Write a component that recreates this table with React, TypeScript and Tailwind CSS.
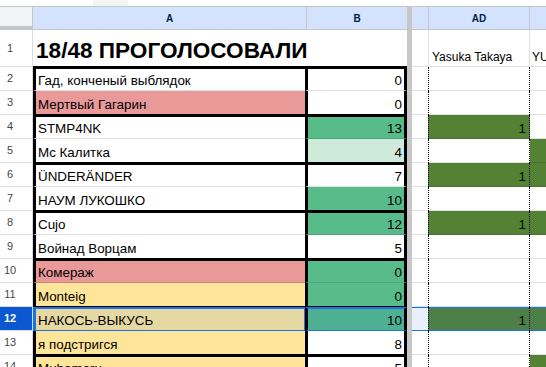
import React from "react"

interface SheetRow {
	n: number
	name: string
	nameBg: string
	votes: number
	votesBg: string
	adBg: string
	adVal?: number
	nextBg: string
}

const WHITE = "bg-white"
const RED = "bg-[#ea9999]"
const YELLOW = "bg-[#ffe599]"
const GREEN = "bg-[#57bb8a]"
const LIGHT = "bg-[#cdeadb]"
const DARK = "bg-[#548235]"

const rows: SheetRow[] = [
	{ n: 2, name: "Гад, конченый выблядок", nameBg: WHITE, votes: 0, votesBg: WHITE, adBg: WHITE, nextBg: WHITE },
	{ n: 3, name: "Мертвый Гагарин", nameBg: RED, votes: 0, votesBg: WHITE, adBg: WHITE, nextBg: WHITE },
	{ n: 4, name: "STMP4NK", nameBg: WHITE, votes: 13, votesBg: GREEN, adBg: DARK, adVal: 1, nextBg: WHITE },
	{ n: 5, name: "Mc Калитка", nameBg: WHITE, votes: 4, votesBg: LIGHT, adBg: WHITE, nextBg: DARK },
	{ n: 6, name: "ÜNDERÄNDER", nameBg: WHITE, votes: 7, votesBg: WHITE, adBg: DARK, adVal: 1, nextBg: DARK },
	{ n: 7, name: "НАУМ ЛУКОШКО", nameBg: WHITE, votes: 10, votesBg: GREEN, adBg: WHITE, nextBg: WHITE },
	{ n: 8, name: "Cujo", nameBg: WHITE, votes: 12, votesBg: GREEN, adBg: DARK, adVal: 1, nextBg: DARK },
	{ n: 9, name: "Войнад Ворцам", nameBg: WHITE, votes: 5, votesBg: WHITE, adBg: WHITE, nextBg: WHITE },
	{ n: 10, name: "Комераж", nameBg: RED, votes: 0, votesBg: GREEN, adBg: WHITE, nextBg: WHITE },
	{ n: 11, name: "Monteig", nameBg: YELLOW, votes: 0, votesBg: GREEN, adBg: WHITE, nextBg: WHITE },
	// selected row: fills carry the blue selection tint
	{ n: 12, name: "НАКОСЬ-ВЫКУСЬ", nameBg: "bg-[#e6d8a3]", votes: 10, votesBg: "bg-[#4eb093]", adBg: "bg-[#4d7f48]", adVal: 1, nextBg: "bg-[#4d7f48]" },
	{ n: 13, name: "я подстригся", nameBg: YELLOW, votes: 8, votesBg: WHITE, adBg: WHITE, nextBg: WHITE },
	{ n: 14, name: "Muhamaru", nameBg: YELLOW, votes: 5, votesBg: WHITE, adBg: WHITE, nextBg: DARK },
]

const SEL = 12

const rowNumClass = (n: number) =>
	n === SEL
		? "flex w-[33px] shrink-0 items-center border-r border-b border-[#dadce0] bg-[#0b57d0] text-[11px] font-bold text-white"
		: "flex w-[33px] shrink-0 items-center border-r border-b border-[#dadce0] bg-white text-[11px] text-[#444746]"

const nameClass = (r: SheetRow) => {
	if (r.n === SEL) return `flex w-[272px] shrink-0 items-end border-l-[3px] border-t-2 border-r border-b border-[#1a73e8] pl-[2px] pb-[2px] ${r.nameBg}`
	const top = r.n % 2 === 0 ? "border-t-2 border-t-black" : ""
	const bottom = r.n % 2 === 1 ? "border-b-black" : "border-b-[rgba(0,0,0,0.12)]"
	return `flex w-[272px] shrink-0 items-end border-l-[3px] border-l-black border-b pl-[2px] pb-[2px] ${top} ${bottom} ${r.nameBg}`
}

const votesClass = (r: SheetRow) => {
	if (r.n === SEL) return `flex w-[102px] shrink-0 items-end justify-end border-x-[3px] border-x-black border-t-2 border-t-[#1a73e8] border-b border-b-[#1a73e8] pr-[2px] pb-[2px] ${r.votesBg}`
	const top = r.n % 2 === 0 ? "border-t-2 border-t-black" : ""
	const bottom = r.n % 2 === 1 ? "border-b-black" : "border-b-[rgba(0,0,0,0.12)]"
	return `flex w-[102px] shrink-0 items-end justify-end border-x-[3px] border-x-black border-b pr-[2px] pb-[2px] ${top} ${bottom} ${r.votesBg}`
}

const lineShadow = (n: number) =>
	n === SEL ? "shadow-[inset_0_1px_0_#1a73e8,inset_0_-1px_0_#1a73e8]" : "shadow-[inset_0_-1px_0_rgba(0,0,0,0.12)]"

const BodyRow = ({ r }: { r: SheetRow }) => (
	<div className="flex h-[24px] text-[13.4px] leading-[15px] text-black">
		<div className={rowNumClass(r.n)}>
			<span className="w-[20px] text-center">{r.n}</span>
		</div>
		<div className={nameClass(r)}>
			<span className="whitespace-nowrap">{r.name}</span>
		</div>
		<div className={votesClass(r)}>{r.votes}</div>
		<div className="w-[5px] shrink-0 bg-[#c7c7c7]" />
		<div className={`w-[16px] shrink-0 ${r.n === SEL ? "bg-[#e8f0fe]" : "bg-white"} ${lineShadow(r.n)}`} />
		<div className={`flex w-[102px] shrink-0 items-end justify-end border-x border-dotted border-black pr-[3px] pb-[3px] ${r.adBg} ${lineShadow(r.n)}`}>
			{r.adVal}
		</div>
		<div className={`flex-1 ${r.nextBg} ${lineShadow(r.n)}`} />
	</div>
)

export default function App() {
	return (
		<div className="h-[367px] w-[546px] overflow-hidden bg-white font-['Liberation_Sans',Arial,sans-serif]">
			{/* strip of the toolbar above the grid */}
			<div className="flex h-[6px]">
				<div className="ml-[93px] w-[35px] bg-[#f4f4f4]" />
			</div>

			{/* column headers */}
			<div className="flex h-[24px] text-[10px] font-bold text-[#041e49]">
				<div className="w-[33px] shrink-0 border-t border-r border-b-4 border-[#c4c7c5] bg-[#f1f3f4]" />
				<div className="flex w-[274px] shrink-0 items-center justify-center border-y border-r border-[#c4c7c5] bg-[#d3e3fd]">A</div>
				<div className="flex w-[100px] shrink-0 items-center justify-center border-y border-[#c4c7c5] bg-[#d3e3fd]">B</div>
				<div className="w-[5px] shrink-0 bg-[#c7c7c7]" />
				<div className="w-[17px] shrink-0 border-y border-r border-[#c4c7c5] bg-[#d3e3fd]" />
				<div className="flex w-[101px] shrink-0 items-center justify-center border-y border-r border-[#c4c7c5] bg-[#d3e3fd]">AD</div>
				<div className="flex-1 border-y border-[#c4c7c5] bg-[#d3e3fd]" />
			</div>

			{/* row 1: title */}
			<div className="flex h-[37px] text-black">
				<div className="flex w-[33px] shrink-0 items-center border-r border-b border-[#dadce0] text-[11px] text-[#444746]">
					<span className="w-[20px] text-center">1</span>
				</div>
				<div className="flex w-[374px] shrink-0 items-end border-b border-b-black pl-[3px] pb-[2px]">
					<span className="whitespace-nowrap text-[22.6px] font-bold leading-[26px]">18/48 ПРОГОЛОСОВАЛИ</span>
				</div>
				<div className="w-[5px] shrink-0 bg-[#c7c7c7]" />
				<div className="w-[16px] shrink-0 border-b border-[#e1e1e1]" />
				<div className="flex w-[102px] shrink-0 items-end border-x border-b border-[#e1e1e1] pl-[3px] pb-[2px] text-[12px] leading-[14px]">
					<span className="whitespace-nowrap">Yasuka Takaya</span>
				</div>
				<div className="flex flex-1 items-end overflow-hidden border-b border-[#e1e1e1] pl-[2px] pb-[2px] text-[12px] leading-[14px]">
					<span className="whitespace-nowrap">YUI</span>
				</div>
			</div>

			{rows.map((r) => (
				<BodyRow key={r.n} r={r} />
			))}
		</div>
	)
}
